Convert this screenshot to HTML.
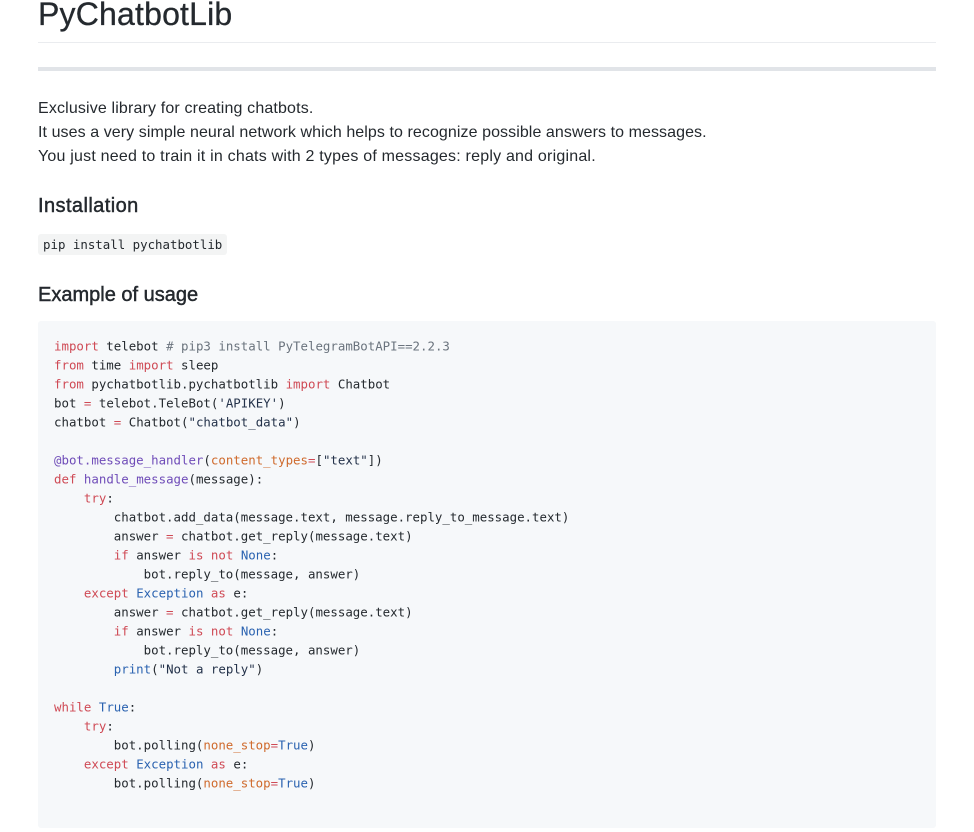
<!DOCTYPE html>
<html>
<head>
<meta charset="utf-8">
<style>
html,body{margin:0;padding:0;background:#fff;width:974px;height:832px;overflow:hidden}
body{position:relative;font-family:"Liberation Sans",sans-serif;color:#24292e}
.a{position:absolute;white-space:pre;margin:0}
.h1{left:38px;top:-7px;font-size:32px;line-height:42px;font-weight:400;-webkit-text-stroke:.3px #24292e;letter-spacing:.19px}
.hr1{position:absolute;left:38px;top:42px;width:898px;height:1px;background:#eaecef}
.hr2{position:absolute;left:38px;top:67px;width:898px;height:4px;background:#e1e4e8}
.p{left:38px;font-size:16px;line-height:24px}
.h3{left:38px;font-size:20px;line-height:26px;font-weight:400;-webkit-text-stroke:.45px #24292e}
.inl{position:absolute;left:38px;top:234px;width:189px;height:21px;background:#f3f4f4;border-radius:3px}
.mono{font-family:"DejaVu Sans Mono",monospace;font-size:12.42px;letter-spacing:0}
.pre{position:absolute;left:38px;top:321px;width:898px;height:507px;background:#f6f8fa;border-radius:3px}
.code{left:54px;top:336px;line-height:19px;color:#24292e;transform:translateY(.5px)}
.k{color:#cf4a55}.c{color:#6a737d}.b{color:#2a62b0}.f{color:#6f4cb8}.o{color:#cf6a2c}.s{color:#24324a}
</style>
</head>
<body>
<h1 class="a h1">PyChatbotLib</h1>
<div class="hr1"></div>
<div class="hr2"></div>
<div class="a p" style="top:97px;letter-spacing:.15px">Exclusive library for creating chatbots.</div>
<div class="a p" style="top:121px;letter-spacing:.077px">It uses a very simple neural network which helps to recognize possible answers to messages.</div>
<div class="a p" style="top:145px;letter-spacing:.21px">You just need to train it in chats with 2 types of messages: reply and original.</div>
<h3 class="a h3" style="top:193px;letter-spacing:.42px">Installation</h3>
<div class="inl"></div>
<div class="a mono" style="left:43px;top:235px;line-height:19px">pip install pychatbotlib</div>
<h3 class="a h3" style="top:282px;letter-spacing:0">Example of usage</h3>
<div class="pre"></div>
<pre class="a mono code"><span class="k">import</span> telebot <span class="c"># pip3 install PyTelegramBotAPI==2.2.3</span>
<span class="k">from</span> time <span class="k">import</span> sleep
<span class="k">from</span> pychatbotlib.pychatbotlib <span class="k">import</span> Chatbot
bot <span class="k">=</span> telebot.TeleBot(<span class="s">'APIKEY'</span>)
chatbot <span class="k">=</span> Chatbot(<span class="s">"chatbot_data"</span>)

<span class="f">@bot.message_handler</span>(<span class="o">content_types</span><span class="k">=</span>[<span class="s">"text"</span>])
<span class="k">def</span> <span class="f">handle_message</span>(message):
    <span class="k">try</span>:
        chatbot.add_data(message.text, message.reply_to_message.text)
        answer <span class="k">=</span> chatbot.get_reply(message.text)
        <span class="k">if</span> answer <span class="k">is</span> <span class="k">not</span> <span class="b">None</span>:
            bot.reply_to(message, answer)
    <span class="k">except</span> <span class="b">Exception</span> <span class="k">as</span> e:
        answer <span class="k">=</span> chatbot.get_reply(message.text)
        <span class="k">if</span> answer <span class="k">is</span> <span class="k">not</span> <span class="b">None</span>:
            bot.reply_to(message, answer)
        <span class="b">print</span>(<span class="s">"Not a reply"</span>)

<span class="k">while</span> <span class="b">True</span>:
    <span class="k">try</span>:
        bot.polling(<span class="o">none_stop</span><span class="k">=</span><span class="b">True</span>)
    <span class="k">except</span> <span class="b">Exception</span> <span class="k">as</span> e:
        bot.polling(<span class="o">none_stop</span><span class="k">=</span><span class="b">True</span>)</pre>
</body>
</html>
